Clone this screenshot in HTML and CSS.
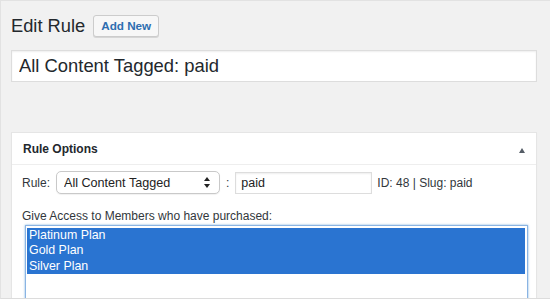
FILE: index.html
```html
<!DOCTYPE html>
<html lang="en">
<head>
    <meta charset="UTF-8">
    <meta name="viewport" content="width=device-width, initial-scale=1.0">
    <title>Edit Rule</title>
<link rel="stylesheet" href="styles.css">
</head>
<body>
    <div class="frame">
        <div class="wrap">
            <div class="heading">
                <h1>Edit Rule</h1>
                <a class="button" href="#">Add New</a>
            </div>
            <input class="title-input" type="text" value="All Content Tagged: paid">

            <div class="postbox">
                <div class="postbox-header">
                    <h2>Rule Options</h2>
                    <span class="toggle"></span>
                </div>
                <div class="inside">
                    <div class="rule-row">
                        <label>Rule:</label>
                        <span class="select-wrap">
                            <select class="rule-select">
                                <option>All Content Tagged</option>
                            </select>
                            <svg class="select-arrows" width="6" height="11" viewBox="0 0 6 11">
                                <path d="M3 0 L6 4 L0 4 Z M3 11 L6 7 L0 7 Z" fill="#222"/>
                            </svg>
                        </span>
                        <span class="colon">:</span>
                        <input class="term-input" type="text" value="paid">
                        <span class="meta">ID: 48 | Slug: paid</span>
                    </div>
                    <p class="access-label">Give Access to Members who have purchased:</p>
                    <div class="listbox">
                        <div class="option selected">Platinum Plan</div>
                        <div class="option selected">Gold Plan</div>
                        <div class="option selected">Silver Plan</div>
                    </div>
                </div>
            </div>
        </div>
    </div>
</body>
</html>
```

FILE: styles.css
```css
body {
    margin: 0;
    background: #f1f1f1;
    font-family: "Liberation Sans", Arial, sans-serif;
    color: #32373c;
}
.frame {
    height: 299px;
    box-sizing: border-box;
    border-top: 1px solid #e2e2e2;
    border-left: 1px solid #e2e2e2;
    border-bottom: 1px solid #dcdcdc;
    overflow: hidden;
}
.wrap {
    padding: 14px 13px 0 10px;
}
.heading {
    display: flex;
    align-items: center;
    gap: 8px;
    height: 22px;
}
.heading h1 {
    margin: 0;
    font-size: 18.3px;
    font-weight: 400;
    line-height: 22px;
    color: #23282d;
}
.button {
    display: inline-block;
    height: 22px;
    box-sizing: border-box;
    padding: 0 7px;
    line-height: 20px;
    font-size: 11.7px;
    font-weight: 700;
    color: #2e6db0;
    text-decoration: none;
    background: #f7f7f7;
    border: 1px solid #cccccc;
    border-radius: 3px;
    box-shadow: 0 1px 0 #d6d6d6;
}
.title-input {
    display: block;
    width: 100%;
    height: 32px;
    box-sizing: border-box;
    margin: 13px 0 0;
    padding: 0 7px;
    font-family: inherit;
    font-size: 18.4px;
    color: #23282d;
    background: #fff;
    border: 1px solid #dddddd;
    box-shadow: inset 0 1px 2px rgba(0, 0, 0, 0.07);
    outline: none;
}
.postbox {
    margin-top: 50px;
    background: #fff;
    border: 1px solid #e5e5e5;
    box-shadow: 0 1px 1px rgba(0, 0, 0, 0.04);
}
.postbox-header {
    display: flex;
    align-items: center;
    justify-content: space-between;
    height: 31px;
    padding: 0 11px 0 11px;
    border-bottom: 1px solid #eeeeee;
}
.postbox-header h2 {
    margin: 0;
    font-size: 12px;
    font-weight: 700;
    color: #23282d;
}
.toggle {
    width: 0;
    height: 0;
    margin-top: 3px;
    border-left: 3px solid transparent;
    border-right: 3px solid transparent;
    border-bottom: 5px solid #555d66;
}
.inside {
    padding: 0 8px 0 10px;
}
.rule-row {
    display: flex;
    align-items: center;
    margin-top: 6px;
    font-size: 12px;
}
.rule-row label {
    margin-right: 6px;
}
.select-wrap {
    position: relative;
    display: inline-block;
}
.rule-select {
    appearance: none;
    -webkit-appearance: none;
    width: 164px;
    height: 23px;
    box-sizing: border-box;
    padding: 0 18px 0 7px;
    font-family: inherit;
    font-size: 12.6px;
    color: #222;
    background: #fff;
    border: 1px solid #c9c9c9;
    border-radius: 5px;
    box-shadow: 0 1px 1px rgba(0, 0, 0, 0.06);
}
.select-arrows {
    position: absolute;
    top: 6px;
    right: 10px;
}
.colon {
    margin: 0 6px;
}
.term-input {
    width: 137px;
    height: 22px;
    box-sizing: border-box;
    padding: 0 5px;
    font-family: inherit;
    font-size: 12.5px;
    color: #222;
    border: 1px solid #dddddd;
    box-shadow: inset 0 1px 2px rgba(0, 0, 0, 0.07);
    outline: none;
}
.meta {
    margin-left: 5px;
}
.access-label {
    margin: 15px 0 1px;
    font-size: 12px;
    line-height: 15px;
}
.listbox {
    margin-left: 3px;
    height: 80px;
    padding: 2px 2px 0 1px;
    background: #fff;
    border: 1px solid #8ab4e3;
    box-shadow: 0 0 2px rgba(91, 157, 217, 0.8);
}
.option {
    padding: 0 2px;
    font-size: 12.4px;
    line-height: 15.4px;
    color: #222;
}
.option.selected {
    color: #fff;
    background: #2a74d1;
}
```
